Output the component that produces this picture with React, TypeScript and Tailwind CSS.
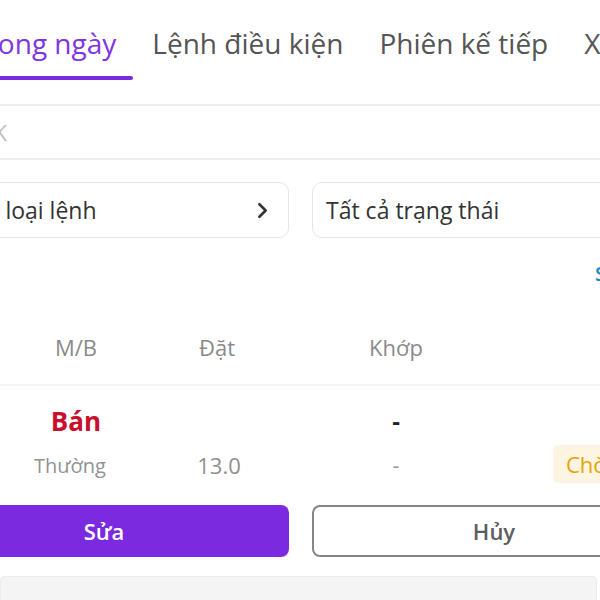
import { ChevronRight } from 'lucide-react'

const TABS = ['Trong ngày', 'Lệnh điều kiện', 'Phiên kế tiếp', 'Xác nhận']

export default function App() {
  return (
    <div className="w-[600px] h-[600px] overflow-hidden bg-white font-['Open_Sans',sans-serif]">
      {/* Tabs */}
      <div className="flex h-[104px] -ml-[47px] whitespace-nowrap">
        {TABS.map((t, i) => (
          <div key={t} className="flex flex-col px-[18px] shrink-0">
            <div
              className={
                'pt-[24px] h-[76px] text-[28px] leading-[38px] ' +
                (i === 0 ? 'text-[#7f35e3]' : 'text-[#555555]')
              }
            >
              {t}
            </div>
            {i === 0 && <div className="h-[4px] -ml-[2px] -mr-[17px] rounded-full bg-[#7b2ae0]" />}
          </div>
        ))}
      </div>

      {/* Search */}
      <div className="-ml-[74px] w-[700px] h-[56px] rounded-[10px] border-2 border-[#ededed] flex items-center px-[14px] shrink-0">
        <span className="text-[22px] text-[#bdbdbd]">Mã CK</span>
      </div>

      {/* Filters */}
      <div className="flex gap-[23px] mt-[22px] -ml-[60px]">
        <div className="w-[349px] shrink-0 h-[56px] rounded-[10px] border-[1.5px] border-[#e6e6e6] flex items-center justify-between pr-[13px] whitespace-nowrap">
          <span className="text-[23px] text-[#333333] -ml-[5px]">Tất cả loại lệnh</span>
          <ChevronRight className="w-[25px] h-[25px] text-[#333333]" strokeWidth={2.5} />
        </div>
        <div className="w-[349px] shrink-0 h-[56px] rounded-[10px] border-[1.5px] border-[#e6e6e6] flex items-center pl-[13px]">
          <span className="text-[23px] text-[#333333]">Tất cả trạng thái</span>
        </div>
      </div>

      {/* Sort link */}
      <div className="h-[72px] flex items-center pl-[595px] whitespace-nowrap">
        <span className="text-[20px] font-semibold text-[#1a8ad4]">Sắp xếp</span>
      </div>

      {/* Table header */}
      <div className="flex h-[74px] items-center text-[22px] text-[#8a8a8a]">
        <div className="w-[152px] shrink-0 text-center">M/B</div>
        <div className="w-[130px] shrink-0 text-center">Đặt</div>
        <div className="w-[228px] shrink-0 text-center">Khớp</div>
      </div>
      <div className="h-[2px] bg-[#f3f3f3]" />

      {/* Order row */}
      <div className="flex pt-[15px] whitespace-nowrap">
        <div className="w-[152px] shrink-0 flex flex-col items-center">
          <div className="text-[26px] leading-[40px] font-bold text-[#c8102e]">Bán</div>
          <div className="text-[20px] leading-[50px] text-[#939393] -ml-[12px]">Thường</div>
        </div>
        <div className="w-[130px] shrink-0 flex flex-col items-center">
          <div className="h-[40px]" />
          <div className="text-[22px] leading-[48px] text-[#8f8f8f] ml-[4px]">13.0</div>
        </div>
        <div className="w-[228px] shrink-0 flex flex-col items-center">
          <div className="text-[24px] leading-[40px] font-bold text-[#222222]">-</div>
          <div className="text-[21px] leading-[48px] text-[#9a9a9a]">-</div>
        </div>
        <div className="pl-[43px] pt-[44px] shrink-0">
          <div className="h-[38px] rounded-[6px] bg-[#fdf4e1] flex items-center px-[13px] text-[22px] text-[#e4a40c]">
            Chờ khớp
          </div>
        </div>
      </div>

      {/* Actions */}
      <div className="flex gap-[23px] mt-[14px] -ml-[60px]">
        <button className="w-[349px] shrink-0 h-[52px] rounded-[8px] bg-[#7b2ae0] text-white text-[22px] font-semibold flex items-center justify-center pr-[21px]">
          Sửa
        </button>
        <button className="w-[349px] shrink-0 h-[52px] rounded-[8px] border-2 border-[#858585] text-[#5e5e5e] text-[22px] font-semibold flex items-center justify-center pl-[15px]">
          Hủy
        </button>
      </div>

      {/* Next card */}
      <div className="mt-[19px] w-[597px] h-[40px] bg-[#f4f4f4] border border-[#ececec] rounded-[4px]" />
    </div>
  )
}
